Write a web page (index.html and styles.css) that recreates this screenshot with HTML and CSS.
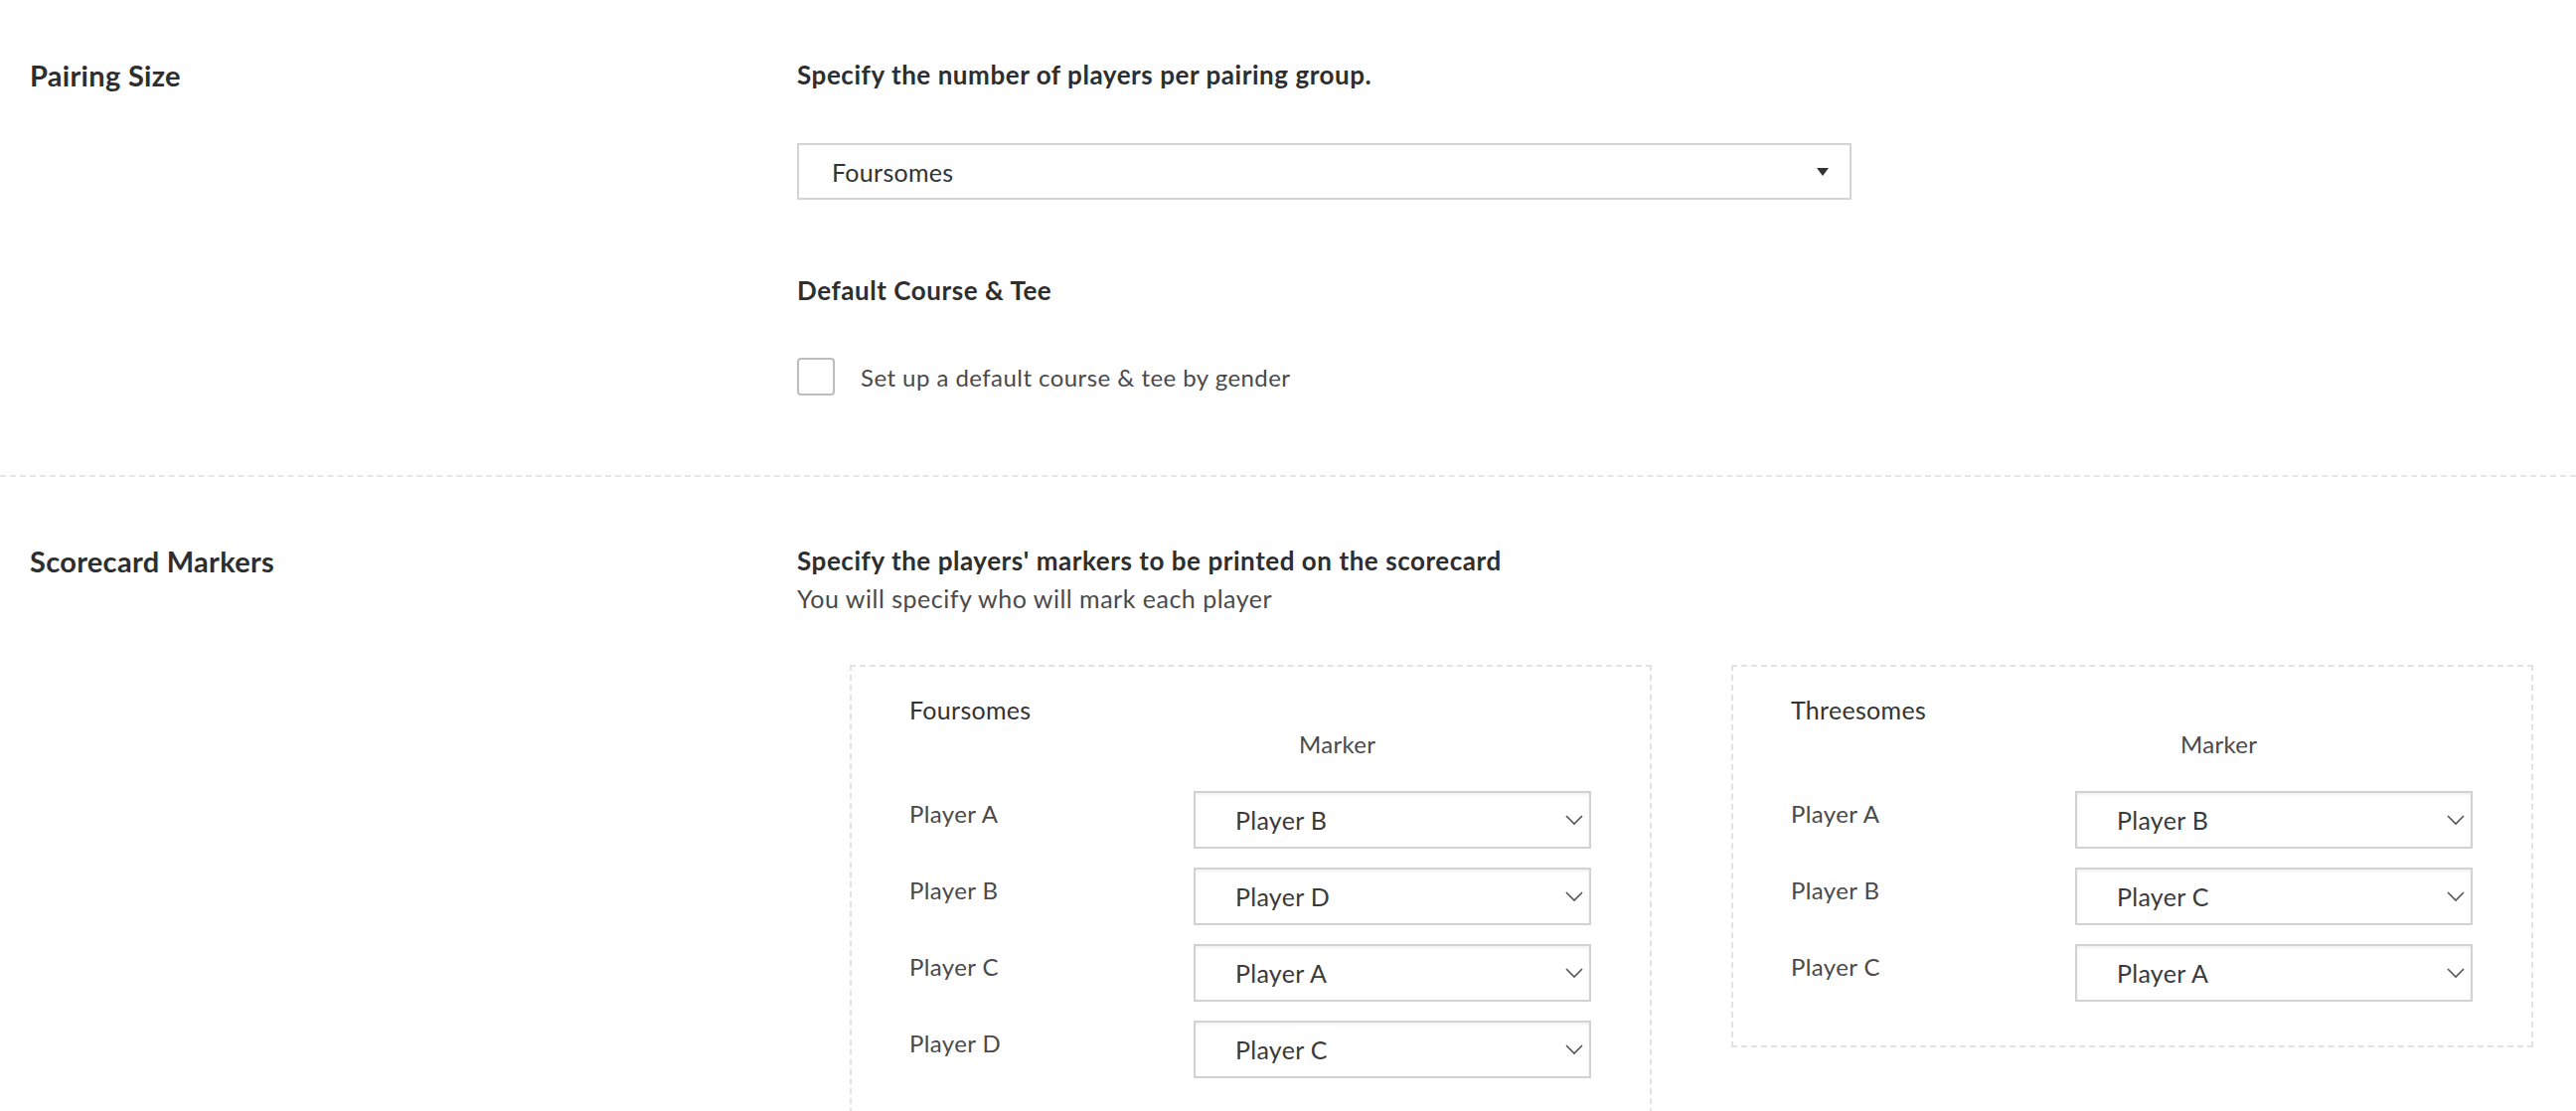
FILE: index.html
```html
<!DOCTYPE html>
<html>
    <head>
        <title>Pairing Settings</title>
        <link rel="stylesheet" href="styles.css">
    </head>
    <body>
        <div class="section section-pairing">
            <p class="section-title">Pairing Size</p>
            <div class="section-body">
                <p class="field-title">Specify the number of players per pairing group.</p>
                <div class="size-select">
                    <span>Foursomes</span>
                    <svg class="caret" width="14" height="10" viewBox="0 0 14 10"><path d="M1 1h12L7 9z" fill="#333"/></svg>
                </div>
                <p class="field-title tee-title">Default Course &amp; Tee</p>
                <label class="check-row">
                    <span class="check-box"></span>
                    <span class="check-label">Set up a default course &amp; tee by gender</span>
                </label>
            </div>
        </div>

        <div class="section section-markers">
            <p class="section-title">Scorecard Markers</p>
            <div class="section-body">
                <p class="field-title">Specify the players' markers to be printed on the scorecard</p>
                <p class="field-note">You will specify who will mark each player</p>

                <div class="groups">
                    <div class="group-box">
                        <p class="group-title">Foursomes</p>
                        <p class="marker-head">Marker</p>
                        <div class="marker-row">
                            <span class="player-name">Player A</span>
                            <div class="marker-select"><span>Player B</span><svg class="chevron" width="20" height="12" viewBox="0 0 20 12"><path d="M2 2l8 8 8-8" fill="none" stroke="#555" stroke-width="1.6"/></svg></div>
                        </div>
                        <div class="marker-row">
                            <span class="player-name">Player B</span>
                            <div class="marker-select"><span>Player D</span><svg class="chevron" width="20" height="12" viewBox="0 0 20 12"><path d="M2 2l8 8 8-8" fill="none" stroke="#555" stroke-width="1.6"/></svg></div>
                        </div>
                        <div class="marker-row">
                            <span class="player-name">Player C</span>
                            <div class="marker-select"><span>Player A</span><svg class="chevron" width="20" height="12" viewBox="0 0 20 12"><path d="M2 2l8 8 8-8" fill="none" stroke="#555" stroke-width="1.6"/></svg></div>
                        </div>
                        <div class="marker-row">
                            <span class="player-name">Player D</span>
                            <div class="marker-select"><span>Player C</span><svg class="chevron" width="20" height="12" viewBox="0 0 20 12"><path d="M2 2l8 8 8-8" fill="none" stroke="#555" stroke-width="1.6"/></svg></div>
                        </div>
                    </div>

                    <div class="group-box">
                        <p class="group-title">Threesomes</p>
                        <p class="marker-head">Marker</p>
                        <div class="marker-row">
                            <span class="player-name">Player A</span>
                            <div class="marker-select"><span>Player B</span><svg class="chevron" width="20" height="12" viewBox="0 0 20 12"><path d="M2 2l8 8 8-8" fill="none" stroke="#555" stroke-width="1.6"/></svg></div>
                        </div>
                        <div class="marker-row">
                            <span class="player-name">Player B</span>
                            <div class="marker-select"><span>Player C</span><svg class="chevron" width="20" height="12" viewBox="0 0 20 12"><path d="M2 2l8 8 8-8" fill="none" stroke="#555" stroke-width="1.6"/></svg></div>
                        </div>
                        <div class="marker-row">
                            <span class="player-name">Player C</span>
                            <div class="marker-select"><span>Player A</span><svg class="chevron" width="20" height="12" viewBox="0 0 20 12"><path d="M2 2l8 8 8-8" fill="none" stroke="#555" stroke-width="1.6"/></svg></div>
                        </div>
                    </div>
                </div>
            </div>
        </div>
    </body>
</html>
```

FILE: styles.css
```css
body{
    margin: 0;
    background-color: white;
    color: #333;
    font-family: Lato, "Open Sans", sans-serif;
}

p{
    margin: 0;
}

.section{
    display: flex;
}

.section-pairing{
    padding-top: 59px;
    padding-bottom: 80px;
    border-bottom: 2px dashed #e6e6e6;
}

.section-markers{
    padding-top: 68px;
}

.section-title{
    width: 772px;
    padding-left: 30px;
    font-size: 29px;
    font-weight: 700;
    letter-spacing: 0.3px;
    line-height: 34px;
    color: #2e2e2e;
}

.section-body{
    flex: 1;
}

.field-title{
    font-size: 26px;
    font-weight: 700;
    letter-spacing: 0.55px;
    line-height: 32px;
    color: #2e2e2e;
}

.field-note{
    font-size: 25px;
    font-weight: 400;
    letter-spacing: 0.5px;
    line-height: 32px;
    color: #4a4a4a;
    margin-top: 6px;
}

.size-select{
    display: flex;
    align-items: center;
    justify-content: space-between;
    box-sizing: border-box;
    width: 1061px;
    height: 57px;
    margin-top: 53px;
    padding: 0 20px 0 33px;
    border: 2px solid #d4d4d4;
    font-size: 25px;
    letter-spacing: 0.3px;
    color: #333;
}

.tee-title{
    margin-top: 75px;
}

.check-row{
    display: flex;
    align-items: center;
    margin-top: 52px;
}

.check-box{
    width: 38px;
    height: 38px;
    box-sizing: border-box;
    border: 2px solid #bdbdbd;
    border-radius: 4px;
}

.check-label{
    margin-left: 26px;
    font-size: 24px;
    font-weight: 400;
    letter-spacing: 0.45px;
    color: #4a4a4a;
}

.groups{
    display: flex;
    gap: 80px;
    align-items: flex-start;
    margin-top: 51px;
    margin-left: 53px;
}

.group-box{
    box-sizing: border-box;
    width: 807px;
    padding: 28px 59px 44px 58px;
    border: 2px dashed #e2e2e2;
}

.group-title{
    font-size: 25px;
    font-weight: 400;
    letter-spacing: 0.3px;
    line-height: 30px;
    color: #333;
}

.marker-head{
    margin-left: 392px;
    margin-top: 5px;
    font-size: 24px;
    font-weight: 400;
    letter-spacing: 0.3px;
    line-height: 30px;
    color: #4a4a4a;
}

.marker-row{
    display: flex;
    align-items: flex-start;
    margin-top: 19px;
}

.marker-head + .marker-row{
    margin-top: 32px;
}

.player-name{
    width: 286px;
    flex-shrink: 0;
    padding-top: 10px;
    font-size: 24px;
    font-weight: 400;
    letter-spacing: 0.4px;
    line-height: 26px;
    color: #4a4a4a;
}

.marker-select{
    display: flex;
    align-items: center;
    justify-content: space-between;
    box-sizing: border-box;
    width: 402px;
    height: 58px;
    padding: 0 5px 0 40px;
    border: 2px solid #d2d2d2;
    box-shadow: inset 0 2px 3px rgba(0,0,0,0.06);
    font-size: 25px;
    letter-spacing: 0.3px;
    color: #3a3a3a;
}
```
